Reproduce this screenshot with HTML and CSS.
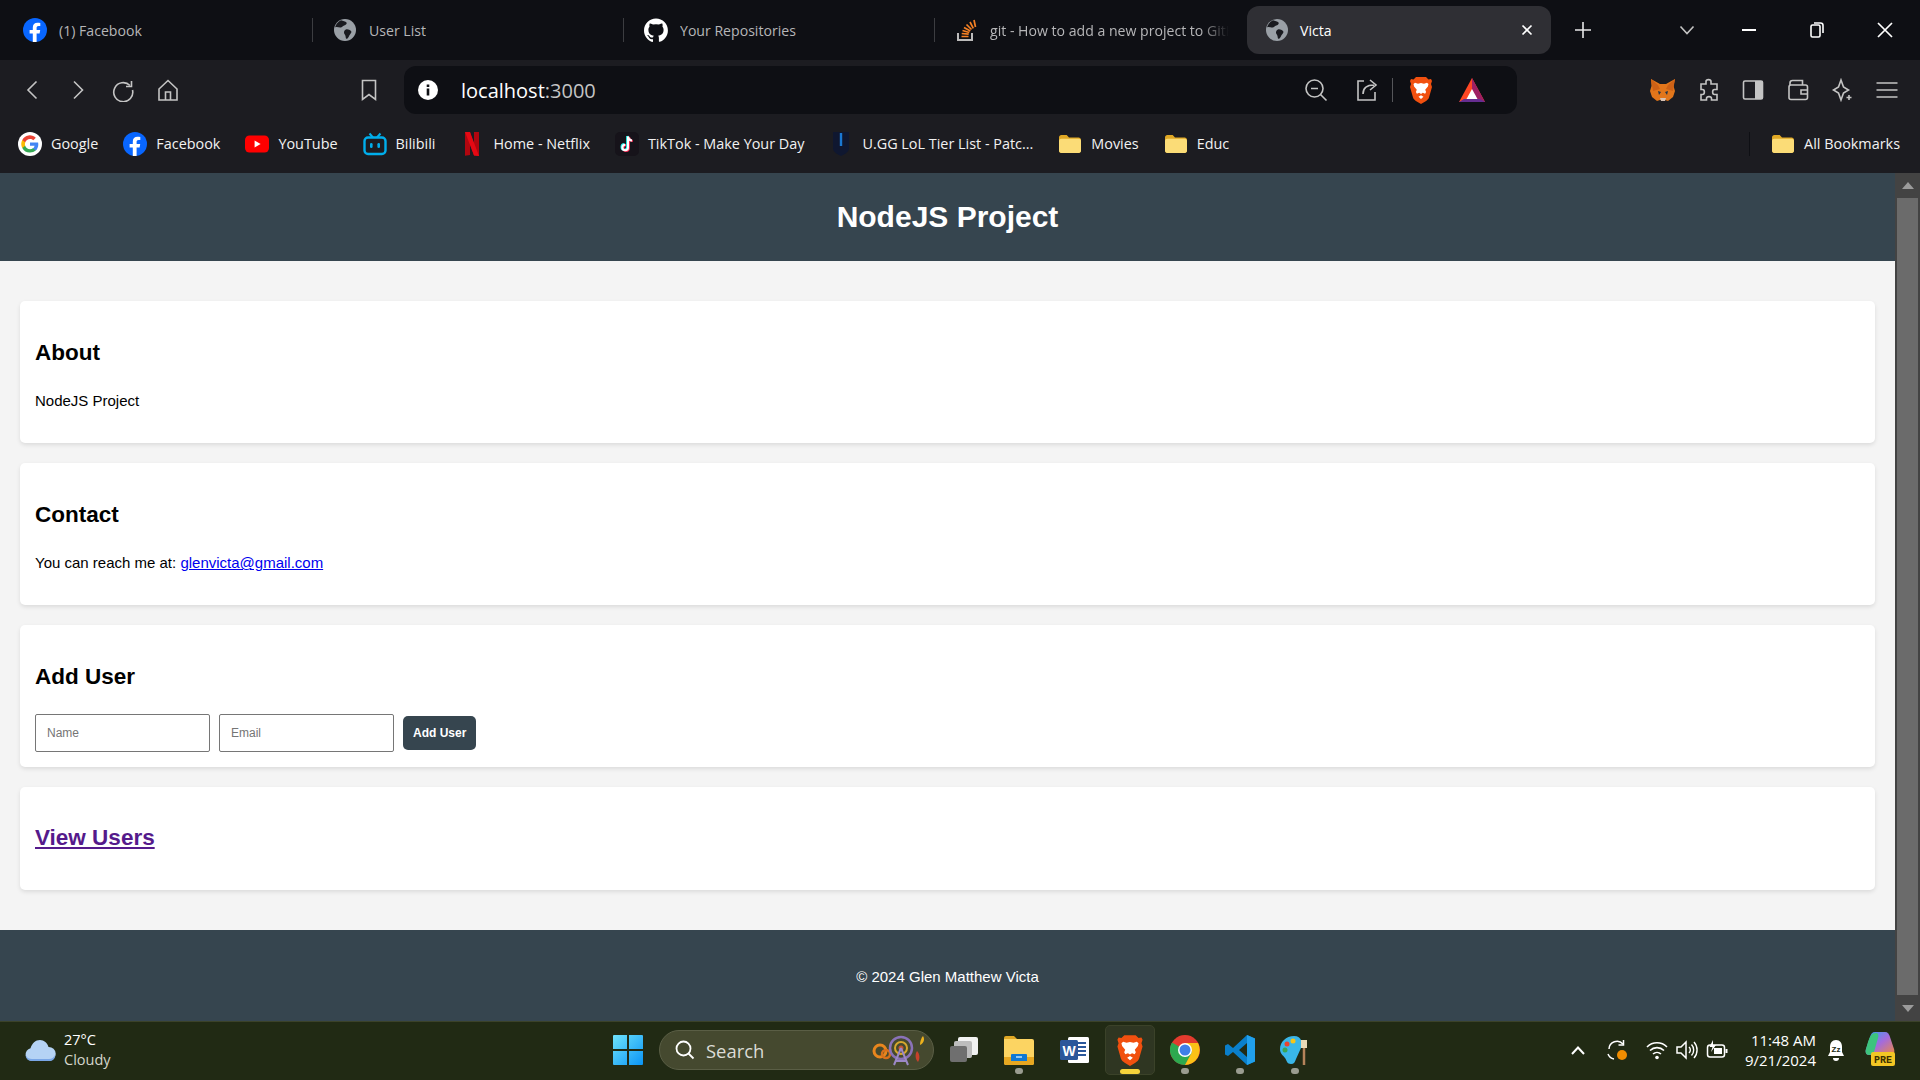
FILE: index.html
```html
<!DOCTYPE html>
<html lang="en">
<head>
  <meta charset="UTF-8">
  <meta name="viewport" content="width=device-width, initial-scale=1.0">
  <title>Victa</title>
  <link rel="stylesheet" href="styles.css">
</head>
<body>

<svg class="defs" width="0" height="0">
  <symbol id="i-fb" viewBox="0 0 24 24">
    <circle cx="12" cy="12" r="12" fill="#0866ff"/>
    <path d="M16.6 15.4l.6-3.4h-3.6V9.8c0-1 .5-1.9 2-1.9h1.7V5c-.9-.1-1.900-.3-2.800-.3-3 0-4.700 1.700-4.700 4.700V12H6.600v3.400h3.200V24h3.800v-8.600z" fill="#fff"/>
  </symbol>
  <symbol id="i-globe" viewBox="0 0 24 24">
    <circle cx="12" cy="12" r="11" fill="#9aa0a6"/>
    <path d="M8 2.200c2 1 4.500.8 5.500 2.300.8 1.200-.8 2.600-2.300 3-1.700.5-2.200 1.900-3.500 2C6 9.700 3.500 8.400 2 9.500 2.800 6.300 5 3.500 8 2.200zM13.500 11.200c1.700-.2 3.300.6 4.500 1.800 1 1-.1 2.400-1 3.400-1.100 1.200-1.300 3.200-2.800 4.300-1 .6-1.600-1-1.600-2.300 0-1.500-1.500-2.200-1.600-3.700-.1-1.600.9-3.300 2.500-3.500z" fill="#1a1b20"/>
  </symbol>
  <symbol id="i-folder" viewBox="0 0 24 24">
    <path d="M1 5.500C1 4.100 2 3 3.400 3h5.300l2.300 2.500h9.600c1.400 0 2.400 1.100 2.400 2.500v10.500c0 1.400-1 2.500-2.400 2.500H3.400C2 21 1 19.900 1 18.500z" fill="#e0a825"/>
    <path d="M1 9c0-1.400 1-2.300 2.400-2.300h17.200C22 6.700 23 7.600 23 9v9.500c0 1.400-1 2.500-2.400 2.500H3.400C2 21 1 19.900 1 18.500z" fill="#fbdc77"/>
  </symbol>
  <symbol id="i-brave" viewBox="0 0 24 28">
    <path d="M7 1h10l2.500 2.500L22 3l1 2-1 3 1 3-3 10.500c-.6 1.700-1.800 2.700-3.300 3.700L12 28l-4.700-2.800C5.800 24.200 4.600 23.200 4 21.500L1 11l1-3-1-3 1-2 2.500.5z" fill="#f1500f"/>
    <path d="M12 7l3 .7 3-.9 1.500 1.200-.6 2.500-2.700 3.300.9 2.100-1 1.800-2.300-.9L12 18l-1.800-1.200-2.300.9-1-1.800.9-2.100-2.700-3.300-.6-2.500L6 6.800l3 .9zM12 19.200l2.500 1.600-2.500 2.100-2.500-2.100z" fill="#fff"/>
  </symbol>
</svg>

<div class="browser">

  <!-- tab strip -->
  <div class="tabstrip">
    <div class="tab tab-first">
      <svg class="favicon"><use href="#i-fb"/></svg>
      <span class="tab-title">(1) Facebook</span>
    </div>
    <div class="tab">
      <svg class="favicon"><use href="#i-globe"/></svg>
      <span class="tab-title">User List</span>
    </div>
    <div class="tab">
      <svg class="favicon" viewBox="0 0 24 24"><path d="M12 .5C5.400.5 0 5.900 0 12.500c0 5.300 3.400 9.800 8.200 11.400.6.100.8-.3.800-.6v-2.100c-3.300.7-4-1.600-4-1.600-.5-1.400-1.300-1.800-1.300-1.800-1.100-.7.100-.7.100-.7 1.200.1 1.800 1.200 1.800 1.200 1.100 1.800 2.800 1.300 3.500 1 .1-.8.400-1.300.8-1.600-2.700-.3-5.500-1.300-5.500-5.900 0-1.300.5-2.400 1.200-3.200-.1-.3-.5-1.500.1-3.200 0 0 1-.3 3.300 1.200a11.500 11.500 0 0 1 6 0c2.300-1.500 3.300-1.200 3.300-1.200.6 1.700.2 2.900.1 3.200.8.800 1.200 1.900 1.200 3.200 0 4.600-2.800 5.600-5.500 5.900.4.400.8 1.100.8 2.200v3.300c0 .3.200.7.800.6 4.800-1.600 8.200-6.100 8.200-11.400C24 5.900 18.600.5 12 .5z" fill="#fff"/></svg>
      <span class="tab-title">Your Repositories</span>
    </div>
    <div class="tab tab-last">
      <svg class="favicon" viewBox="0 0 24 24">
        <path d="M4 15v7h14v-7" fill="none" stroke="#bcbbbb" stroke-width="2"/>
        <path d="M7.500 18.500h7M7.700 15.500l7 .7M8.500 12.500l6.800 2M10 9.500l6.300 3.500M12.500 6.500l5 5M16 4l3.300 6.300M20 2l1.500 7" stroke="#f48024" stroke-width="1.700" fill="none"/>
      </svg>
      <span class="tab-title tab-fade">git - How to add a new project to GitHub</span>
    </div>
    <div class="tab-active">
      <svg class="favicon"><use href="#i-globe"/></svg>
      <span class="tab-title-active">Victa</span>
      <svg class="tab-close" viewBox="0 0 12 12"><path d="M1.500 1.500l9 9M10.500 1.500l-9 9" stroke="#fff" stroke-width="1.700"/></svg>
    </div>
    <svg class="tab-plus" viewBox="0 0 18 18"><path d="M9 1v16M1 9h16" stroke="#e8e8e8" stroke-width="1.600"/></svg>
    <svg class="tab-list" viewBox="0 0 16 10"><path d="M1.500 1.500L8 8.500l6.500-7" stroke="#c4c4c4" stroke-width="1.600" fill="none"/></svg>
    <div class="win-btn win-first"><svg width="16" height="16" viewBox="0 0 16 16"><path d="M1 8h14" stroke="#fff" stroke-width="2"/></svg></div>
    <div class="win-btn"><svg width="16" height="18" viewBox="0 0 16 18"><rect x="2" y="4" width="9" height="12" rx="1.500" fill="none" stroke="#fff" stroke-width="1.600"/><path d="M5 2h6.500C13 2 14 3 14 4.500V12" fill="none" stroke="#fff" stroke-width="1.600"/></svg></div>
    <div class="win-btn"><svg width="16" height="16" viewBox="0 0 16 16"><path d="M1 1l14 14M15 1L1 15" stroke="#fff" stroke-width="1.700"/></svg></div>
  </div>

  <!-- toolbar -->
  <div class="toolbar">
    <div class="nav-btns">
      <svg class="tool" viewBox="0 0 24 24"><path d="M15.500 3.500L7 12l8.500 8.500" class="ln"/></svg>
      <svg class="tool" viewBox="0 0 24 24"><path d="M8 3.500l8.500 8.500L8 20.500" class="ln"/></svg>
      <svg class="tool" viewBox="0 0 24 24"><path d="M19 7.500A9.500 9.500 0 1 0 21.500 12" class="ln"/><path d="M20.500 3v5.500H15" class="ln"/></svg>
      <svg class="tool" viewBox="0 0 24 24"><path d="M3 11l9-8.500 9 8.500v11H3zM9.500 22v-8h5v8" class="ln"/></svg>
    </div>
    <svg class="tool bookmark-btn" viewBox="0 0 24 24"><path d="M5.500 2.500h13v19L12 16.500l-6.500 5z" class="ln"/></svg>
    <div class="omnibox">
      <svg class="info" viewBox="0 0 20 20"><circle cx="10" cy="10" r="10" fill="#fff"/><path d="M8.700 4.500h2.600v2.500H8.700zM8.700 8.500h2.600v7H8.700z" fill="#0e0f14"/></svg>
      <span class="url">localhost<span class="url-port">:3000</span></span>
      <div class="omni-right">
        <svg class="tool" viewBox="0 0 24 24"><circle cx="10.500" cy="10.500" r="8.500" class="ln"/><path d="M7 10.500h7M16.500 16.500l6 6" class="ln"/></svg>
        <svg class="tool share" viewBox="0 0 24 24"><path d="M9 3H3v19h17v-8" class="ln"/><path d="M8 16c0-6 4-9 11-9M15 2l6 5-6 5" class="ln"/></svg>
        <span class="omni-sep"></span>
        <svg class="brave-btn"><use href="#i-brave"/></svg>
        <svg class="bat" viewBox="0 0 26 24"><path d="M13 0l13 24H0z" fill="#ff4724"/><path d="M13 0l13 24H18L13 13z" fill="#9e1f63"/><path d="M0 24l5-3h16l5 3z" fill="#662d91"/><path d="M13 11l5.500 10H7.500z" fill="#fff"/></svg>
      </div>
    </div>
    <div class="extensions">
      <svg class="ext" viewBox="0 0 26 24">
        <path d="M1 1l9 5h6l9-5-1.500 7 1.500 5-2 6-5 4-3-1h-5l-3 1-5-4-2-6 1.500-5z" fill="#e2761b"/>
        <path d="M8 13l3 1-2 3zM18 13l-3 1 2 3z" fill="#233447"/>
        <path d="M10 20h6l-1 3h-4z" fill="#d7c1b3"/>
        <path d="M1 1l7 6 2 4-7 2zM25 1l-7 6-2 4 7 2z" fill="#cd6116"/>
      </svg>
      <svg class="tool" viewBox="0 0 24 24"><path d="M9 3.500c0-2.500 5-2.500 5 0V6h6v5.500h-2.500c-2.500 0-2.500 5 0 5H20V22h-5.500v-1.500c0-2.500-5-2.500-5 0V22H4v-5.500h1.500c2.500 0 2.500-5 0-5H4V6h5z" class="ln"/></svg>
      <svg class="tool" viewBox="0 0 24 24"><rect x="2.500" y="3" width="19" height="18" rx="1.500" class="ln"/><path d="M14 3h7.500v18H14z" fill="#c4c4c4"/></svg>
      <svg class="tool" viewBox="0 0 24 24"><path d="M4 7V5c0-1.500 1-2.500 2.500-2.500h10V7" class="ln"/><rect x="3" y="7" width="18.500" height="14.500" rx="2" class="ln"/><path d="M21.500 12H15v4h6.500" class="ln"/></svg>
      <svg class="tool" viewBox="0 0 24 24"><path d="M11 2l2.500 7 5 3-5 3L11 22l-2.500-7-5-3 5-3zM19 17v5M16.500 19.500h5" class="ln"/></svg>
      <svg class="tool" viewBox="0 0 24 24"><path d="M1.500 5h21M1.500 12h21M1.500 19h21" class="ln"/></svg>
    </div>
  </div>

  <!-- bookmarks -->
  <div class="bookmarks">
    <div class="bm">
      <svg class="bm-icon" viewBox="0 0 24 24">
        <circle cx="12" cy="12" r="12" fill="#fff"/>
        <path d="M20.300 12.200c0-.6-.1-1.200-.2-1.800H12v3.400h4.600a4 4 0 0 1-1.700 2.600v2.200h2.800c1.700-1.500 2.600-3.800 2.600-6.400z" fill="#4285f4"/>
        <path d="M12 20.500c2.300 0 4.200-.8 5.700-2l-2.800-2.200c-.8.500-1.800.9-2.900.9-2.200 0-4.100-1.500-4.800-3.500H4.300v2.300A8.500 8.500 0 0 0 12 20.500z" fill="#34a853"/>
        <path d="M7.200 13.700a5 5 0 0 1 0-3.300V8H4.300a8.500 8.500 0 0 0 0 8z" fill="#fbbc05"/>
        <path d="M12 6.900c1.300 0 2.400.4 3.300 1.300L17.800 5.700A8.500 8.500 0 0 0 4.300 8l2.900 2.300C7.900 8.300 9.800 6.900 12 6.900z" fill="#ea4335"/>
      </svg>
      <span>Google</span>
    </div>
    <div class="bm">
      <svg class="bm-icon"><use href="#i-fb"/></svg>
      <span>Facebook</span>
    </div>
    <div class="bm">
      <svg class="bm-icon" viewBox="0 0 24 24"><rect y="3.500" width="24" height="17" rx="4.500" fill="#f00"/><path d="M9.600 8.500v7l6-3.500z" fill="#fff"/></svg>
      <span>YouTube</span>
    </div>
    <div class="bm">
      <svg class="bm-icon" viewBox="0 0 24 24"><path d="M6.500 1.500l3.500 4M17.500 1.500l-3.500 4" stroke="#00aeec" stroke-width="2"/><rect x="1.500" y="5.500" width="21" height="16.500" rx="3.500" fill="none" stroke="#00aeec" stroke-width="2.400"/><rect x="7" y="11" width="2.600" height="5" rx="1.300" fill="#00aeec"/><rect x="14.400" y="11" width="2.600" height="5" rx="1.300" fill="#00aeec"/></svg>
      <span>Bilibili</span>
    </div>
    <div class="bm">
      <svg class="bm-icon" viewBox="0 0 24 24"><path d="M5 0h5l4 12V0h5v24l-5-.5-4-11.500v11l-5 .7z" fill="#b1060f"/><path d="M5 0h5l9 24-5-.5z" fill="#e50914"/></svg>
      <span>Home - Netflix</span>
    </div>
    <div class="bm">
      <svg class="bm-icon" viewBox="0 0 24 24">
        <rect width="24" height="24" rx="5" fill="#16131a"/>
        <path d="M13 4.500v11a2.800 2.800 0 1 1-2.800-2.800M13 4.500c.3 2.300 1.800 3.800 4 4" fill="none" stroke="#25f4ee" stroke-width="2.200" transform="translate(-.8 -.5)"/>
        <path d="M13 4.500v11a2.800 2.800 0 1 1-2.800-2.800M13 4.500c.3 2.300 1.800 3.800 4 4" fill="none" stroke="#fe2c55" stroke-width="2.200" transform="translate(.8 .5)"/>
        <path d="M13 4.500v11a2.800 2.800 0 1 1-2.800-2.800M13 4.500c.3 2.300 1.800 3.800 4 4" fill="none" stroke="#fff" stroke-width="2"/>
      </svg>
      <span>TikTok - Make Your Day</span>
    </div>
    <div class="bm">
      <svg class="bm-icon" viewBox="0 0 24 24"><path d="M4 0h16v16c0 4-4 6-8 8-4-2-8-4-8-8z" fill="#0f1730"/><rect x="10.800" y="1" width="2.400" height="13" fill="#1a78d2"/></svg>
      <span>U.GG LoL Tier List - Patc...</span>
    </div>
    <div class="bm">
      <svg class="bm-icon"><use href="#i-folder"/></svg>
      <span>Movies</span>
    </div>
    <div class="bm">
      <svg class="bm-icon"><use href="#i-folder"/></svg>
      <span>Educ</span>
    </div>
    <span class="bm-sep"></span>
    <div class="bm">
      <svg class="bm-icon"><use href="#i-folder"/></svg>
      <span>All Bookmarks</span>
    </div>
  </div>

  <!-- page -->
  <div class="viewport">
    <div class="page">
      <header class="site-header">
        <h1>NodeJS Project</h1>
      </header>
      <main class="site-main">
        <section class="card">
          <h2>About</h2>
          <p>NodeJS Project</p>
        </section>
        <section class="card">
          <h2>Contact</h2>
          <p>You can reach me at: <a class="link" href="#">glenvicta@gmail.com</a></p>
        </section>
        <section class="card">
          <h2>Add User</h2>
          <form class="user-form">
            <input type="text" placeholder="Name">
            <input type="email" placeholder="Email">
            <button type="button">Add User</button>
          </form>
        </section>
        <section class="card">
          <h2><a class="link-visited" href="#">View Users</a></h2>
        </section>
      </main>
      <footer class="site-footer">
        <p>&copy; 2024 Glen Matthew Victa</p>
      </footer>
    </div>
    <div class="scrollbar">
      <div class="arrow-up"></div>
      <div class="thumb"></div>
      <div class="arrow-down"></div>
    </div>
  </div>

  <!-- taskbar -->
  <div class="taskbar">
    <div class="weather">
      <svg class="weather-icon" viewBox="0 0 32 24">
        <path d="M8 23a6.500 6.500 0 0 1-1.500-12.800C8 5.500 11.500 2 16 2c4 0 7.500 3 8.500 7A7 7 0 0 1 25 23z" fill="#b5d3f5"/>
        <path d="M1.700 17C3 20 5 21 8 21h17c3 0 5-1.500 5.500-4 1 4-2 6-5.500 6H8c-4 0-6.500-3-6.300-6z" fill="#79a6e6"/>
      </svg>
      <div class="weather-text">
        <span>27°C</span>
        <span class="weather-sub">Cloudy</span>
      </div>
    </div>
    <div class="task-center">
      <svg class="start" viewBox="0 0 30 30">
        <defs><linearGradient id="win" x1="0" y1="0" x2="1" y2="1"><stop offset="0" stop-color="#6fe3fb"/><stop offset="1" stop-color="#0a94f5"/></linearGradient></defs>
        <path d="M0 1a1 1 0 0 1 1-1h13v14H0zM16 0h13a1 1 0 0 1 1 1v13H16zM0 16h14v14H1a1 1 0 0 1-1-1zM16 16h14v13a1 1 0 0 1-1 1H16z" fill="url(#win)"/>
      </svg>
      <div class="search">
        <svg class="search-icon" viewBox="0 0 20 20"><circle cx="8.500" cy="8.500" r="7" fill="none" stroke="#fff" stroke-width="1.800"/><path d="M13.500 13.500l5 5" stroke="#fff" stroke-width="1.800"/></svg>
        <span>Search</span>
        <svg class="search-art" viewBox="0 0 58 32">
          <circle cx="9" cy="17" r="6" fill="none" stroke="#e8861e" stroke-width="3"/>
          <circle cx="15" cy="20" r="4" fill="none" stroke="#d9701a" stroke-width="2.500"/>
          <circle cx="30" cy="14" r="11" fill="none" stroke="#8a72b8" stroke-width="2.500"/>
          <circle cx="30" cy="14" r="6" fill="none" stroke="#d6a72e" stroke-width="2"/>
          <circle cx="30" cy="14" r="2.500" fill="#c6542c"/>
          <path d="M30 14l-7 17M30 14l7 17M24 27h12" stroke="#9c88c6" stroke-width="2"/>
          <path d="M52 2c2 3 1 7-3 9 0-3 1-7 3-9z" fill="#eeb21c"/>
          <path d="M46 17c3 3 3 8 1 11-3-3-3-8-1-11z" fill="#c6412a"/>
        </svg>
      </div>
      <div class="task-item">
        <svg class="task-icon" viewBox="0 0 30 30"><rect x="9" y="2" width="20" height="18" rx="2" fill="#f2f2f2"/><rect x="5" y="6" width="18" height="17" rx="2" fill="#bdbdbd"/><rect x="1" y="11" width="17" height="16" rx="2" fill="#6f6f6f"/></svg>
      </div>
      <div class="task-item">
        <svg class="task-icon" viewBox="0 0 30 30"><path d="M0 3a2 2 0 0 1 2-2h8l3 3h-13z" fill="#e0a825"/><path d="M0 4h28a2 2 0 0 1 2 2v22a2 2 0 0 1-2 2H2a2 2 0 0 1-2-2z" fill="#fcd462"/><path d="M0 22h30v6a2 2 0 0 1-2 2H2a2 2 0 0 1-2-2z" fill="#e7a721"/><path d="M8 19h14a1 1 0 0 1 1 1v6H7v-6a1 1 0 0 1 1-1z" fill="#0f78d4"/><path d="M12 22h6" stroke="#bfe3ff" stroke-width="1.500"/></svg>
        <span class="task-dot"></span>
      </div>
      <div class="task-item">
        <svg class="task-icon" viewBox="0 0 30 30"><rect x="9" y="2" width="21" height="26" rx="1.500" fill="#fff"/><path d="M17 8h10M17 12h10M17 16h10M17 20h10" stroke="#2b579a" stroke-width="2"/><rect x="1" y="5" width="18" height="20" rx="1.500" fill="#2b579a"/><text x="10" y="20.500" class="word-w">W</text></svg>
      </div>
      <div class="task-item task-active">
        <svg class="task-icon brave-task"><use href="#i-brave"/></svg>
        <span class="task-bar"></span>
      </div>
      <div class="task-item">
        <svg class="task-icon" viewBox="0 0 30 30"><circle cx="15" cy="15" r="15" fill="#e33b2e"/><path d="M15 15L2 7.500A15 15 0 0 0 15 30l7.500-13z" fill="#2da94f"/><path d="M15 8h13a15 15 0 0 1-13 22l7-13z" fill="#fbc116"/><circle cx="15" cy="15" r="7" fill="#fff"/><circle cx="15" cy="15" r="5.500" fill="#3f7fe8"/></svg>
        <span class="task-dot"></span>
      </div>
      <div class="task-item">
        <svg class="task-icon" viewBox="0 0 30 30"><path d="M22 0l8 3.500v23L22 30 8 17l-5 4-3-1.500v-9L3 9l5 4zM22 8l-8 7 8 7z" fill="#0a7fcb"/><path d="M22 0l8 3.500v23L22 30z" fill="#21a0ec"/></svg>
        <span class="task-dot"></span>
      </div>
      <div class="task-item">
        <svg class="task-icon" viewBox="0 0 30 30"><path d="M14 1C6 1 0 7 0 14c0 5 3 6 5 9s2 6 6 6c3 0 4-2 5-5l5-11c2-4 1-12-7-12z" fill="#39b6e8"/><circle cx="7" cy="9" r="2.500" fill="#e8432e"/><circle cx="13" cy="6" r="2.500" fill="#f5c518"/><circle cx="5" cy="15" r="2.500" fill="#3aa655"/><path d="M24 12v18" stroke="#b5835a" stroke-width="2.500"/><path d="M21 5h6v8h-6z" fill="#e8d9b8"/></svg>
        <span class="task-dot"></span>
      </div>
    </div>
    <div class="tray">
      <svg class="tray-up" viewBox="0 0 14 9"><path d="M1 8l6-6.500L13 8" fill="none" stroke="#fff" stroke-width="2"/></svg>
      <svg class="tray-icon sync" viewBox="0 0 22 22"><path d="M3 10a8 8 0 0 1 14-5M2 15a8 8 0 0 0 6 5" fill="none" stroke="#fff" stroke-width="1.500"/><path d="M17.500 1v5h-5" fill="none" stroke="#fff" stroke-width="1.500"/><circle cx="16" cy="16" r="5" fill="#f08c00"/></svg>
      <svg class="tray-icon" viewBox="0 0 22 20"><path d="M1 7a14 14 0 0 1 20 0M4 10.500a10 10 0 0 1 14 0M7 14a6 6 0 0 1 8 0" fill="none" stroke="#fff" stroke-width="1.600"/><circle cx="11" cy="17.500" r="1.800" fill="#fff"/></svg>
      <svg class="tray-icon" viewBox="0 0 22 20"><path d="M1 7h4l5-5v16l-5-5H1z" fill="none" stroke="#fff" stroke-width="1.500"/><path d="M13 7a4 4 0 0 1 0 6M15.500 4.500a8 8 0 0 1 0 11M18 2a12 12 0 0 1 0 16" fill="none" stroke="#fff" stroke-width="1.400"/></svg>
      <svg class="tray-icon" viewBox="0 0 22 20"><rect x="1.500" y="5" width="17" height="12" rx="2.500" fill="none" stroke="#fff" stroke-width="1.500"/><path d="M20.500 9v4" stroke="#fff" stroke-width="2"/><rect x="8" y="8" width="8" height="6" fill="#fff"/><path d="M7 0L3.500 7h3L5 12l5-7H7z" fill="#fff"/></svg>
      <div class="clock">
        <span>11:48 AM</span>
        <span>9/21/2024</span>
      </div>
      <svg class="tray-icon bell" viewBox="0 0 20 24"><path d="M10 2c-4 0-6 3-6 7v5l-2 4h16l-2-4V9c0-4-2-7-6-7z" fill="#fff"/><path d="M7 20a3 3 0 0 0 6 0z" fill="#fff"/><text x="10" y="14" class="bell-z">Zz</text></svg>
      <svg class="copilot" viewBox="0 0 30 36">
        <defs><linearGradient id="cop" x1="0" y1="0" x2="1" y2="1"><stop offset="0" stop-color="#2aa5f5"/><stop offset=".5" stop-color="#a46bdc"/><stop offset="1" stop-color="#f08a3c"/></linearGradient></defs>
        <path d="M10 0h10c3 0 4 2 5 5l4 12c1 3 0 6-4 6H4c-3 0-4-3-3-6L5 5c1-3 2-5 5-5z" fill="url(#cop)"/>
        <path d="M3 10C5 4 7 1 11 1c2 0 3 2 2 5l-4 14c-1 2-3 3-5 3-3 0-4-3-3-6z" fill="#3dc47e"/>
        <rect x="6" y="20" width="24" height="14" rx="2" fill="#f3c624"/>
        <text x="18" y="31" class="pre">PRE</text>
      </svg>
    </div>
  </div>

</div>

</body>
</html>
```

FILE: styles.css
```css
* {
  box-sizing: border-box;
}
html, body {
  margin: 0;
  height: 100%;
  overflow: hidden;
}
body {
  font-family: "Liberation Sans", Arial, sans-serif;
}
.defs {
  display: none;
}
.browser {
  display: flex;
  flex-direction: column;
  height: 1080px;
  font-family: "Open Sans", "Noto Sans", sans-serif;
}

/* tab strip */
.tabstrip {
  height: 60px;
  flex: none;
  display: flex;
  align-items: center;
  padding-left: 2px;
  background-color: #0e0f14;
  color: #b6b6b8;
  font-size: 14.1px;
}
.tab {
  width: 311px;
  height: 24px;
  flex: none;
  display: flex;
  align-items: center;
  padding-left: 20px;
  border-right: 1px solid #3c3d41;
}
.tab-first {
  padding-left: 21px;
}
.tab-last {
  width: 294px;
  border-right: none;
  margin-right: 18px;
  padding-left: 19px;
}
.tab-title {
  white-space: nowrap;
  overflow: hidden;
}
.tab-fade {
  -webkit-mask-image: linear-gradient(to right, #000 88%, transparent);
  mask-image: linear-gradient(to right, #000 88%, transparent);
}
.favicon {
  width: 24px;
  height: 24px;
  flex: none;
  margin-right: 12px;
}
.tab-active {
  width: 304px;
  height: 48px;
  flex: none;
  display: flex;
  align-items: center;
  padding: 0 18px 0 18px;
  background-color: #2f2f34;
  border-radius: 12px;
  color: #fff;
}
.tab-active .favicon {
  margin-right: 11px;
}
.tab-title-active {
  flex: 1;
}
.tab-close {
  width: 12px;
  height: 12px;
}
.tab-plus {
  width: 18px;
  height: 18px;
  margin-left: 23px;
}
.tab-list {
  width: 16px;
  height: 10px;
  margin-left: 87px;
}
.win-btn {
  width: 68px;
  display: flex;
  justify-content: center;
}
.win-first {
  margin-left: 20px;
}

/* toolbar */
.toolbar {
  height: 54px;
  flex: none;
  display: flex;
  align-items: center;
  background-color: #1c1c21;
  padding-left: 21px;
  padding-top: 6px;
}
.tool {
  width: 24px;
  height: 24px;
  flex: none;
}
.ln {
  fill: none;
  stroke: #c4c4c4;
  stroke-width: 1.6;
}
.nav-btns {
  display: flex;
  gap: 21px;
}
.bookmark-btn {
  margin-left: 177px;
}
.omnibox {
  width: 1113px;
  height: 48px;
  margin-left: 23px;
  display: flex;
  align-items: center;
  padding-left: 14px;
  background-color: #0e0f14;
  border-radius: 12px;
}
.info {
  width: 20px;
  height: 20px;
  flex: none;
}
.url {
  margin-left: 23px;
  font-size: 20px;
  color: #fff;
}
.url-port {
  color: #c4c4c4;
}
.omni-right {
  margin-left: auto;
  margin-right: 32px;
  display: flex;
  align-items: center;
}
.share {
  margin-left: 27px;
}
.omni-sep {
  width: 1px;
  height: 24px;
  margin: 0 14px 0 13px;
  background-color: #55565a;
}
.brave-btn {
  width: 28px;
  height: 28px;
}
.bat {
  width: 26px;
  height: 24px;
  margin-left: 24px;
}
.extensions {
  display: flex;
  align-items: center;
  gap: 20.5px;
  margin-left: 133px;
}
.ext {
  width: 26px;
  height: 24px;
}

/* bookmarks */
.bookmarks {
  height: 59px;
  flex: none;
  display: flex;
  align-items: center;
  gap: 25px;
  padding-left: 18px;
  background-color: #1c1c21;
  color: #f2f2f2;
  font-size: 14.4px;
}
.bm {
  display: flex;
  align-items: center;
  gap: 9px;
  white-space: nowrap;
}
.bm-icon {
  width: 24px;
  height: 24px;
  flex: none;
}
.bm-sep {
  width: 1px;
  height: 24px;
  margin-left: auto;
  margin-right: -4px;
  background-color: #0e0f14;
}
.bm-sep + .bm {
  margin-right: 20px;
}

/* page */
.viewport {
  flex: 1;
  min-height: 0;
  display: flex;
  font-family: "Liberation Sans", Arial, sans-serif;
}
.page {
  flex: 1;
  min-width: 0;
  overflow: hidden;
  background-color: #f4f4f4;
  color: #000;
  font-size: 15px;
  line-height: 1.6;
}
.site-header {
  background-color: #36454f;
  color: white;
  padding: 20px;
  text-align: center;
}
.site-header h1 {
  margin: 0;
  font-size: 30px;
}
.site-main {
  padding: 20px;
}
.card {
  background-color: white;
  padding: 15px;
  margin: 20px 0;
  border-radius: 5px;
  box-shadow: 0 2px 4px rgba(0, 0, 0, 0.1);
}
.card h2 {
  margin: 18.6px 0;
  font-size: 22.5px;
}
.card p {
  margin: 15px 0;
}
.link {
  color: #0000ee;
}
.link-visited {
  color: #551a8b;
}
.user-form {
  display: flex;
  align-items: center;
  gap: 9px;
}
.user-form input {
  width: 175px;
  height: 38px;
  padding: 11px;
  font-family: "Liberation Sans", Arial, sans-serif;
  font-size: 12px;
  border: 1px solid #767676;
  border-radius: 2px;
}
.user-form button {
  height: 34px;
  padding: 0 10px;
  background-color: #36454f;
  color: white;
  border: none;
  border-radius: 5px;
  font-family: "Liberation Sans", Arial, sans-serif;
  font-size: 12px;
  font-weight: bold;
}
.site-footer {
  background-color: #36454f;
  color: white;
  padding: 20px;
  text-align: center;
}
.site-footer p {
  margin: 15px 0;
}
.scrollbar {
  width: 25px;
  flex: none;
  display: flex;
  flex-direction: column;
  align-items: center;
  padding: 9px 0 9px;
  background-color: #434343;
}
.arrow-up {
  width: 0;
  height: 0;
  border-left: 6px solid transparent;
  border-right: 6px solid transparent;
  border-bottom: 7px solid #9b9b9b;
}
.arrow-down {
  width: 0;
  height: 0;
  border-left: 6px solid transparent;
  border-right: 6px solid transparent;
  border-top: 7px solid #9b9b9b;
}
.thumb {
  width: 21px;
  flex: 1;
  margin: 9px 0 10px;
  background-color: #6b6b6b;
}

/* taskbar */
.taskbar {
  height: 59px;
  flex: none;
  display: flex;
  align-items: center;
  padding-left: 24px;
  padding-bottom: 2px;
  background-color: #212a14;
  border-top: 1px solid #3b4229;
  color: #fff;
  font-size: 14.5px;
}
.weather {
  width: 589px;
  display: flex;
  align-items: center;
  gap: 8px;
}
.weather-icon {
  width: 32px;
  height: 24px;
}
.weather-text {
  display: flex;
  flex-direction: column;
  line-height: 20px;
}
.weather-sub {
  color: #d4d6cc;
}
.task-center {
  display: flex;
  align-items: center;
}
.start {
  width: 30px;
  height: 30px;
  flex: none;
}
.search {
  width: 275px;
  height: 40px;
  margin-left: 16px;
  display: flex;
  align-items: center;
  padding-left: 15px;
  gap: 11px;
  background-color: #45492f;
  border: 1px solid #5a5e45;
  border-radius: 20px;
  color: #dcdcd6;
  font-size: 18.4px;
}
.search-icon {
  width: 20px;
  height: 20px;
  flex: none;
}
.search-art {
  width: 58px;
  height: 32px;
  margin-left: auto;
  margin-right: 4px;
}
.task-item {
  position: relative;
  width: 50px;
  height: 50px;
  margin-left: 5px;
  display: flex;
  justify-content: center;
  align-items: center;
  border-radius: 5px;
}
.task-active {
  margin-left: 6px;
  background-color: #2f3622;
  border: 1px solid #3b4229;
}
.task-icon {
  width: 30px;
  height: 30px;
}
.brave-task {
  width: 30px;
  height: 32px;
}
.task-dot {
  position: absolute;
  left: 21px;
  bottom: 1px;
  width: 8px;
  height: 6px;
  border-radius: 3px;
  background-color: #9a9c90;
}
.task-bar {
  position: absolute;
  left: 14px;
  bottom: 0;
  width: 20px;
  height: 5px;
  border-radius: 3px;
  background-color: #f5d33b;
}
.word-w {
  font-family: "Liberation Sans", Arial, sans-serif;
  font-size: 14px;
  font-weight: bold;
  fill: #fff;
  text-anchor: middle;
}
.tray {
  margin-left: auto;
  display: flex;
  align-items: center;
  padding-right: 25px;
}
.tray-up {
  width: 14px;
  height: 9px;
  margin-right: 21px;
}
.tray-icon {
  width: 22px;
  height: 20px;
  margin-right: 8px;
}
.sync {
  height: 22px;
  margin-right: 18px;
}
.clock {
  display: flex;
  flex-direction: column;
  align-items: flex-end;
  width: 70px;
  margin-left: 10px;
  line-height: 20px;
  font-size: 15px;
  white-space: nowrap;
}
.bell {
  width: 20px;
  height: 24px;
  margin: 0 0 0 10px;
}
.bell-z {
  font-family: "Liberation Sans", Arial, sans-serif;
  font-size: 8px;
  font-weight: bold;
  fill: #212a14;
  text-anchor: middle;
}
.copilot {
  width: 30px;
  height: 36px;
  margin-left: 19px;
}
.pre {
  font-family: "Liberation Mono", monospace;
  font-size: 10px;
  font-weight: bold;
  fill: #3c3000;
  text-anchor: middle;
}
```
